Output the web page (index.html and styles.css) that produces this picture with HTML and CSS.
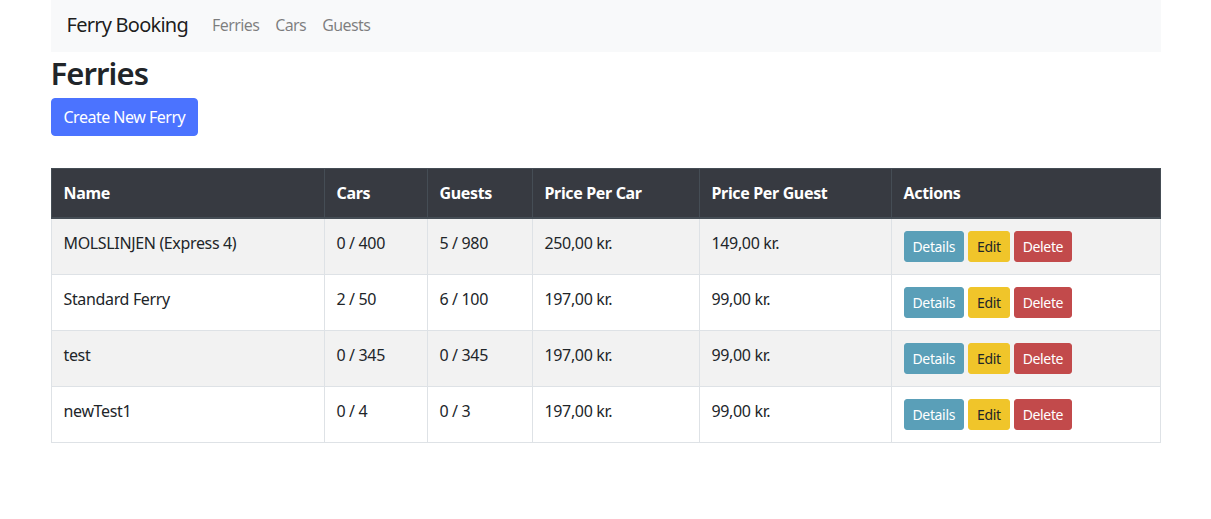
FILE: index.html
```html
<!DOCTYPE html>
<html lang="en">
<head>
<meta charset="utf-8">
<title>Ferries - Ferry Booking</title>
<link rel="stylesheet" href="styles.css">
</head>
<body>
<div class="container">
  <nav class="navbar">
    <a class="brand" href="#">Ferry Booking</a>
    <ul class="nav-links">
      <li><a href="#">Ferries</a></li>
      <li><a href="#">Cars</a></li>
      <li><a href="#">Guests</a></li>
    </ul>
  </nav>
  <main>
    <h1 class="title">Ferries</h1>
    <a class="btn btn-primary" href="#">Create New Ferry</a>
    <table class="table">
      <thead>
        <tr>
          <th class="c-name">Name</th>
          <th class="c-cars">Cars</th>
          <th class="c-guests">Guests</th>
          <th class="c-pcar">Price Per Car</th>
          <th class="c-pguest">Price Per Guest</th>
          <th>Actions</th>
        </tr>
      </thead>
      <tbody>
        <tr>
          <td>MOLSLINJEN (Express 4)</td><td>0 / 400</td><td>5 / 980</td><td>250,00 kr.</td><td>149,00 kr.</td>
          <td><div class="actions"><a class="btn btn-sm btn-info" href="#">Details</a><a class="btn btn-sm btn-warning" href="#">Edit</a><a class="btn btn-sm btn-danger" href="#">Delete</a></div></td>
        </tr>
        <tr>
          <td>Standard Ferry</td><td>2 / 50</td><td>6 / 100</td><td>197,00 kr.</td><td>99,00 kr.</td>
          <td><div class="actions"><a class="btn btn-sm btn-info" href="#">Details</a><a class="btn btn-sm btn-warning" href="#">Edit</a><a class="btn btn-sm btn-danger" href="#">Delete</a></div></td>
        </tr>
        <tr>
          <td>test</td><td>0 / 345</td><td>0 / 345</td><td>197,00 kr.</td><td>99,00 kr.</td>
          <td><div class="actions"><a class="btn btn-sm btn-info" href="#">Details</a><a class="btn btn-sm btn-warning" href="#">Edit</a><a class="btn btn-sm btn-danger" href="#">Delete</a></div></td>
        </tr>
        <tr>
          <td>newTest1</td><td>0 / 4</td><td>0 / 3</td><td>197,00 kr.</td><td>99,00 kr.</td>
          <td><div class="actions"><a class="btn btn-sm btn-info" href="#">Details</a><a class="btn btn-sm btn-warning" href="#">Edit</a><a class="btn btn-sm btn-danger" href="#">Delete</a></div></td>
        </tr>
      </tbody>
    </table>
  </main>
</div>
</body>
</html>
```
FILE: styles.css
```css
* { box-sizing: border-box; }
html, body { margin: 0; padding: 0; }
body {
  font-family: "Noto Sans", "Open Sans", sans-serif;
  font-size: 16px;
  line-height: 1.5;
  letter-spacing: -0.35px;
  color: #212529;
  background: #fff;
}
a { text-decoration: none; }
.container {
  width: 1110px;
  margin: 0 auto;
}
.navbar {
  display: flex;
  align-items: center;
  height: 52px;
  padding: 0 16px;
  background: #f8f9fa;
}
.brand {
  font-size: 20px;
  color: rgba(0, 0, 0, .9);
  margin-right: 16px;
  line-height: 30px;
  margin-top: -3px;
  letter-spacing: -0.75px;
}
.nav-links {
  display: flex;
  list-style: none;
  margin: -3px 0 0;
  padding: 0;
}
.nav-links a {
  display: block;
  padding: 8px;
  color: rgba(0, 0, 0, .5);
  font-size: 16px;
  letter-spacing: -0.6px;
}
.title {
  margin: 0 0 8px;
  padding-top: 3px;
  height: 38px;
  font-size: 31px;
  font-weight: 600;
  line-height: 1.2;
  letter-spacing: -0.9px;
}
.btn {
  display: inline-block;
  font-size: 16px;
  line-height: 24px;
  padding: 6px 12px;
  border: 1px solid transparent;
  border-radius: 4px;
  color: #fff;
}
.btn-primary {
  background: #4b73ff;
  border-color: #4b73ff;
  letter-spacing: -0.5px;
}
.table {
  width: 100%;
  margin-top: 32px;
  border-collapse: collapse;
}
.table th, .table td {
  padding: 12px;
  border: 1px solid #dee2e6;
  text-align: left;
  vertical-align: top;
  height: 56px;
}
.table thead th {
  background: #373a41;
  color: #fff;
  font-weight: 700;
  border-color: #454d55;
  border-bottom: 2px solid #454d55;
  height: 49px;
  padding-bottom: 11px;
}
.table tbody tr:nth-child(odd) { background: #f2f2f2; }
.c-name { width: 273px; }
.c-cars { width: 103px; }
.c-guests { width: 105px; }
.c-pcar { width: 167px; }
.c-pguest { width: 192px; }
.actions {
  display: flex;
  gap: 4px;
}
.btn-sm {
  font-size: 14px;
  line-height: 21px;
  padding: 4px 8px;
  border-radius: 3px;
}
.btn-info { background: #5a9fb8; border-color: #5a9fb8; color: #fff; }
.btn-warning { background: #f0c52a; border-color: #f0c52a; color: #212529; }
.btn-danger { background: #c24a4b; border-color: #c24a4b; color: #fff; }
```
